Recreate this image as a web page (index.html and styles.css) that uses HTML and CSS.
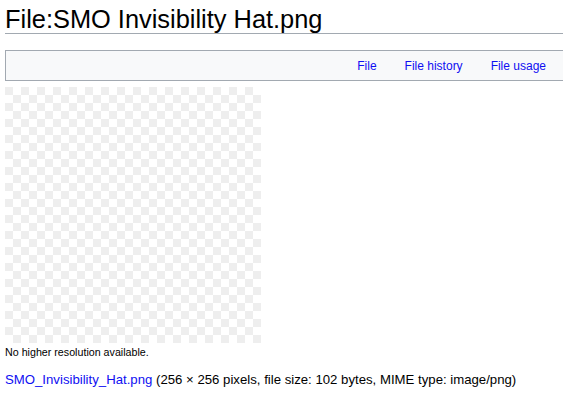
FILE: index.html
```html
<!DOCTYPE html>
<html lang="en">
<head>
    <meta charset="UTF-8">
    <meta name="viewport" content="width=device-width, initial-scale=1.0">
    <title>File:SMO Invisibility Hat.png</title>
    <link rel="stylesheet" href="styles.css">
</head>
<body>
    <div class="page">
        <h1 class="title">File:SMO Invisibility Hat.png</h1>

        <ul class="filetoc">
            <li><a href="#file">File</a></li>
            <li><a href="#filehistory">File history</a></li>
            <li><a href="#filelinks">File usage</a></li>
        </ul>

        <div class="preview" id="file">
            <div class="checker"></div>
        </div>
        <p class="note">No higher resolution available.</p>

        <p class="fileinfo"><a href="#file">SMO_Invisibility_Hat.png</a> (256 × 256 pixels, file size: 102 bytes, MIME type: image/png)</p>
    </div>
</body>
</html>
```

FILE: styles.css
```css
html, body {
    overflow: hidden;
}
body {
    margin: 0;
    font-family: 'Liberation Sans', Arial, sans-serif;
    color: #202122;
    background-color: white;
}
a {
    color: #0f0ff2;
    text-decoration: none;
}
.page {
    margin-left: 5px;
    width: 559px;
}
.title {
    margin: 0;
    padding-top: 6px;
    font-size: 25.4px;
    font-weight: normal;
    line-height: 27px;
    color: #000;
    border-bottom: 1px solid #a2a9b1;
}
.filetoc {
    list-style: none;
    margin: 16px 0 0 0;
    padding: 0 17px 0 0;
    height: 29px;
    display: flex;
    justify-content: flex-end;
    align-items: center;
    gap: 28px;
    font-size: 12px;
    background-color: #f8f9fa;
    border: 1px solid #a2a9b1;
}
.preview {
    margin-top: 6px;
    width: 256px;
    height: 256px;
}
.checker {
    width: 100%;
    height: 100%;
    background-image: conic-gradient(#fff 25%, #eee 0 50%, #fff 0 75%, #eee 0);
    background-size: 16px 16px;
}
.note {
    margin: 3px 0 0 0;
    font-size: 10.7px;
    color: #000;
}
.fileinfo {
    margin: 14px 0 0 0;
    font-size: 13.2px;
    color: #000;
}
```
